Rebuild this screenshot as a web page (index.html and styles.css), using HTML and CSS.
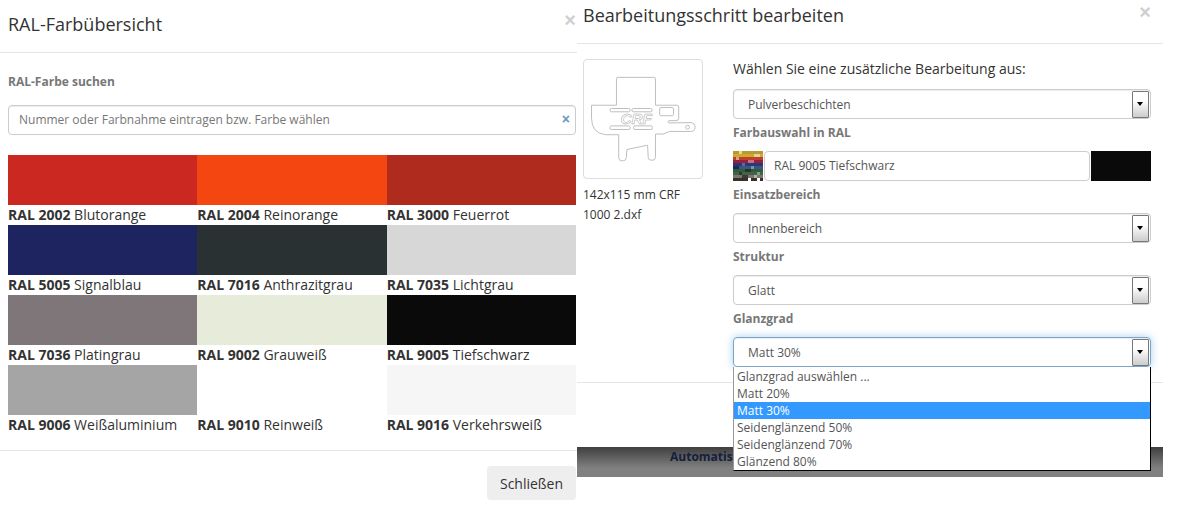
FILE: index.html
```html
<!DOCTYPE html>
<html lang="de">

<head>
    <meta charset="UTF-8">
    <title>RAL-Farbübersicht</title>
    <link rel="stylesheet" href="styles.css">
</head>

<body>
    <div class="seite">
        <div class="modalLinks">
            <div class="kopfLinks">
                <h4 class="titel">RAL-Farbübersicht</h4>
                <span class="schliessenX">×</span>
            </div>
            <div class="inhaltLinks">
                <label class="feldname suchname">RAL-Farbe suchen</label>
                <div class="suche">
                    <span>Nummer oder Farbnahme eintragen bzw. Farbe wählen</span>
                    <span class="sucheX">×</span>
                </div>
                <div class="farben">
                    <div class="farbe"><div class="feld f2002"></div><b>RAL 2002</b> Blutorange</div>
                    <div class="farbe"><div class="feld f2004"></div><b>RAL 2004</b> Reinorange</div>
                    <div class="farbe"><div class="feld f3000"></div><b>RAL 3000</b> Feuerrot</div>
                    <div class="farbe"><div class="feld f5005"></div><b>RAL 5005</b> Signalblau</div>
                    <div class="farbe"><div class="feld f7016"></div><b>RAL 7016</b> Anthrazitgrau</div>
                    <div class="farbe"><div class="feld f7035"></div><b>RAL 7035</b> Lichtgrau</div>
                    <div class="farbe"><div class="feld f7036"></div><b>RAL 7036</b> Platingrau</div>
                    <div class="farbe"><div class="feld f9002"></div><b>RAL 9002</b> Grauweiß</div>
                    <div class="farbe"><div class="feld f9005"></div><b>RAL 9005</b> Tiefschwarz</div>
                    <div class="farbe"><div class="feld f9006"></div><b>RAL 9006</b> Weißaluminium</div>
                    <div class="farbe"><div class="feld f9010"></div><b>RAL 9010</b> Reinweiß</div>
                    <div class="farbe"><div class="feld f9016"></div><b>RAL 9016</b> Verkehrsweiß</div>
                </div>
            </div>
            <div class="fussLinks">
                <button class="knopf">Schließen</button>
            </div>
        </div>

        <div class="modalRechts">
            <div class="kopfRechts">
                <h4 class="titel">Bearbeitungsschritt bearbeiten</h4>
                <span class="schliessenX">×</span>
            </div>
            <div class="inhaltRechts">
                <div class="vorschau">
                    <div class="rahmen">
                        <svg class="teil" viewBox="9 12 360 360">
                            <g fill="none" stroke="#bdbdbd" stroke-width="3">
                                <path d="M108 70 Q108 65 113 65 L222 65 Q227 65 227 70 L227 150 L293 150 Q298 150 298 155 L298 190 Q298 197 290 197 L268 197 Q261 200 268 204 L335 203 Q348 205 348 217 Q348 230 335 230 L270 230 L250 238 L227 238 L227 310 Q227 318 216 318 Q205 318 205 310 L203 272 L140 285 L138 310 Q138 320 126 320 Q115 320 115 310 L115 240 L75 240 Q32 235 32 190 L32 150 L108 150 Z" />
                                <rect x="88" y="160" width="62" height="10" rx="5" />
                                <rect x="155" y="160" width="62" height="10" rx="5" />
                                <rect x="88" y="213" width="62" height="11" rx="5" />
                                <rect x="160" y="213" width="58" height="11" rx="5" />
                                <rect x="240" y="157" width="42" height="25" rx="4" />
                                <circle cx="325" cy="217" r="6" />
                            </g>
                            <text class="crf" x="120" y="207" textLength="96" lengthAdjust="spacingAndGlyphs">CRF</text>
                        </svg>
                    </div>
                    <div class="dateiname">142x115 mm CRF 1000 2.dxf</div>
                </div>
                <div class="formular">
                    <div class="frage">Wählen Sie eine zusätzliche Bearbeitung aus:</div>
                    <div class="auswahl"><span>Pulverbeschichten</span><span class="pfeil"></span></div>
                    <label class="feldname">Farbauswahl in RAL</label>
                    <div class="ralZeile">
                        <svg class="palette" viewBox="0 0 10 10" shape-rendering="crispEdges">
                            <rect width="10" height="1" fill="#b89a34" />
                            <rect y="1" width="10" height="1" fill="#cfa92c" />
                            <rect y="2" width="10" height="1" fill="#bd3f2c" />
                            <rect y="3" width="10" height="1" fill="#98203a" />
                            <rect y="4" width="10" height="1" fill="#27397a" />
                            <rect y="5" width="10" height="1" fill="#3f557f" />
                            <rect y="6" width="10" height="1" fill="#2a5f3c" />
                            <rect y="7" width="10" height="1" fill="#4b5f48" />
                            <rect y="8" width="10" height="1" fill="#77776e" />
                            <rect y="9" width="10" height="1" fill="#3b3028" />
                            <rect x="2" width="1" height="1" fill="#e6d890" />
                            <rect x="7" y="1" width="2" height="1" fill="#e0d49a" />
                            <rect x="1" y="2" width="1" height="1" fill="#d8a090" />
                            <rect x="5" y="3" width="2" height="1" fill="#c87080" />
                            <rect x="3" y="4" width="1" height="1" fill="#5a6aa0" />
                            <rect x="0" y="5" width="2" height="1" fill="#202a50" />
                            <rect x="6" y="5" width="1" height="1" fill="#8090b0" />
                            <rect x="4" y="6" width="2" height="1" fill="#1d3a28" />
                            <rect x="8" y="7" width="1" height="1" fill="#7fa08a" />
                            <rect x="2" y="7" width="1" height="1" fill="#2a3a2a" />
                            <rect x="3" y="8" width="2" height="1" fill="#3a3a3a" />
                            <rect x="7" y="8" width="1" height="1" fill="#b0b0a8" />
                            <rect x="5" y="9" width="1" height="1" fill="#ffffff" />
                            <rect x="8" y="9" width="1" height="1" fill="#ffffff" />
                        </svg>
                        <div class="ralName">RAL 9005 Tiefschwarz</div>
                        <div class="ralFeld"></div>
                    </div>
                    <label class="feldname">Einsatzbereich</label>
                    <div class="auswahl"><span>Innenbereich</span><span class="pfeil"></span></div>
                    <label class="feldname">Struktur</label>
                    <div class="auswahl"><span>Glatt</span><span class="pfeil"></span></div>
                    <label class="feldname">Glanzgrad</label>
                    <div class="auswahl aktiv">
                        <span>Matt 30%</span><span class="pfeil"></span>
                        <ul class="liste">
                            <li>Glanzgrad auswählen ...</li>
                            <li>Matt 20%</li>
                            <li class="gewaehlt">Matt 30%</li>
                            <li>Seidenglänzend 50%</li>
                            <li>Seidenglänzend 70%</li>
                            <li>Glänzend 80%</li>
                        </ul>
                    </div>
                </div>
            </div>
            <div class="fussRechts"></div>
            <div class="band"><b>Automatis</b></div>
        </div>
    </div>
</body>

</html>
```

FILE: styles.css
```css
* {
    box-sizing: border-box;
}

body {
    margin: 0;
    background-color: white;
    color: #333;
    font-family: "Open Sans", sans-serif;
    font-size: 14px;
}

.seite {
    display: flex;
    width: 1179px;
    height: 512px;
    overflow: hidden;
}

/* linke Seite */
.modalLinks {
    width: 577px;
    flex-shrink: 0;
}

.kopfLinks {
    height: 53px;
    padding: 0 1px 0 8px;
    border-bottom: 1px solid #e5e5e5;
    display: flex;
    justify-content: space-between;
    align-items: flex-start;
}

.kopfRechts {
    height: 44px;
    padding: 0 12px 0 6px;
    border-bottom: 1px solid #e5e5e5;
    display: flex;
    justify-content: space-between;
    align-items: flex-start;
}

.titel {
    margin: 0;
    font-size: 18px;
    font-weight: 400;
    line-height: 25px;
}

.kopfLinks .titel {
    margin-top: 12px;
}

.kopfRechts .titel {
    margin-top: 3px;
}

.schliessenX {
    color: #cfcfcf;
    font-size: 20px;
    font-weight: 700;
    line-height: 20px;
    font-family: "Liberation Sans", sans-serif;
}

.kopfLinks .schliessenX {
    margin-top: 10px;
}

.kopfRechts .schliessenX {
    margin-top: 2px;
}

.inhaltLinks {
    height: 397px;
    padding: 20px 1px 0 8px;
}

.feldname {
    display: block;
    height: 18px;
    margin-top: 5px;
    margin-bottom: 9px;
    color: #777;
    font-size: 12px;
    font-weight: 700;
    line-height: 18px;
}

.suchname {
    margin-top: 0;
    margin-bottom: 14px;
}

.suche {
    height: 30px;
    padding: 0 5px 2px 10px;
    border: 1px solid #ccc;
    border-radius: 4px;
    box-shadow: inset 0 1px 1px rgba(0, 0, 0, .075);
    color: #777;
    font-size: 12px;
    display: flex;
    justify-content: space-between;
    align-items: center;
}

.sucheX {
    color: #6a9ab8;
    font-size: 14px;
    font-weight: 700;
    font-family: "Liberation Sans", sans-serif;
}

.farben {
    margin-top: 20px;
    display: grid;
    grid-template-columns: repeat(3, 1fr);
}

.farbe {
    height: 70px;
    line-height: 20px;
    white-space: nowrap;
}

.feld {
    height: 50px;
}

.f2002 { background-color: #cb2821; }
.f2004 { background-color: #f44611; }
.f3000 { background-color: #af2b1e; }
.f5005 { background-color: #1e2460; }
.f7016 { background-color: #293133; }
.f7035 { background-color: #d7d7d7; }
.f7036 { background-color: #7f7679; }
.f9002 { background-color: #e7ebda; }
.f9005 { background-color: #0a0a0a; }
.f9006 { background-color: #a5a5a5; }
.f9010 { background-color: #ffffff; }
.f9016 { background-color: #f6f6f6; }

.fussLinks {
    height: 62px;
    padding: 15px 1px 0 0;
    border-top: 1px solid #e5e5e5;
    display: flex;
    justify-content: flex-end;
    align-items: flex-start;
}

.knopf {
    width: 89px;
    height: 34px;
    padding: 0;
    border: 0;
    border-radius: 4px;
    background-color: #eee;
    color: #333;
    font-family: "Open Sans", sans-serif;
    font-size: 14px;
}

/* rechte Seite */
.modalRechts {
    width: 586px;
    flex-shrink: 0;
}

.inhaltRechts {
    height: 338px;
    padding: 15px 12px 0 6px;
    display: flex;
}

.vorschau {
    width: 120px;
    margin-right: 30px;
    flex-shrink: 0;
}

.rahmen {
    width: 120px;
    height: 120px;
    border: 1px solid #ddd;
    border-radius: 4px;
}

.teil {
    display: block;
    width: 118px;
    height: 118px;
}

.crf {
    fill: white;
    stroke: #a8a8a8;
    stroke-width: 1.5;
    font-family: "Liberation Sans", sans-serif;
    font-size: 44px;
    font-style: italic;
    font-weight: 700;
}

.dateiname {
    margin-top: 6px;
    font-size: 12px;
    line-height: 20px;
}

.formular {
    flex: 1;
}

.frage {
    height: 30px;
    line-height: 20px;
}

.auswahl {
    position: relative;
    width: 418px;
    height: 30px;
    padding: 0 1px 0 14px;
    border: 1px solid #ccc;
    border-radius: 4px;
    box-shadow: inset 0 1px 1px rgba(0, 0, 0, .075);
    color: #555;
    font-size: 12px;
    display: flex;
    justify-content: space-between;
    align-items: center;
}

.aktiv {
    border-color: #7aa5c9;
    box-shadow: inset 0 1px 1px rgba(0, 0, 0, .075), 0 0 8px rgba(102, 175, 233, .6);
}

.pfeil {
    position: relative;
    width: 17px;
    height: 27px;
    border: 1px solid #777;
    border-radius: 1px;
    background: linear-gradient(#fff 35%, #ccc);
}

.pfeil::after {
    content: "";
    position: absolute;
    left: 4px;
    top: 10px;
    border-left: 3.5px solid transparent;
    border-right: 3.5px solid transparent;
    border-top: 4px solid #000;
}

.ralZeile {
    height: 30px;
    display: flex;
}

.palette {
    display: block;
    width: 30px;
    height: 30px;
    flex-shrink: 0;
}

.ralName {
    width: 326px;
    margin-left: 1px;
    padding-left: 9px;
    border: 1px solid #ccc;
    border-radius: 4px;
    color: #555;
    font-size: 12px;
    line-height: 28px;
}

.ralFeld {
    width: 60px;
    margin-left: 1px;
    background-color: #0a0a0a;
}

.liste {
    position: absolute;
    left: -1px;
    top: 29px;
    width: 418px;
    margin: 0;
    padding: 1px 0 0;
    list-style: none;
    background-color: white;
    border-left: 1px solid #999;
    border-right: 1px solid #000;
    border-bottom: 1px solid #000;
    z-index: 5;
}

.liste li {
    height: 17px;
    padding-left: 3px;
    color: #555;
    font-size: 12px;
    line-height: 17px;
}

.liste .gewaehlt {
    background-color: #3399ff;
    color: white;
}

.fussRechts {
    height: 65px;
    border-top: 1px solid #e5e5e5;
}

.band {
    height: 30px;
    padding-left: 93px;
    background: linear-gradient(#3f3f3f, #808080 70%);
    color: #14203c;
    font-size: 12px;
    line-height: 19px;
}
```
